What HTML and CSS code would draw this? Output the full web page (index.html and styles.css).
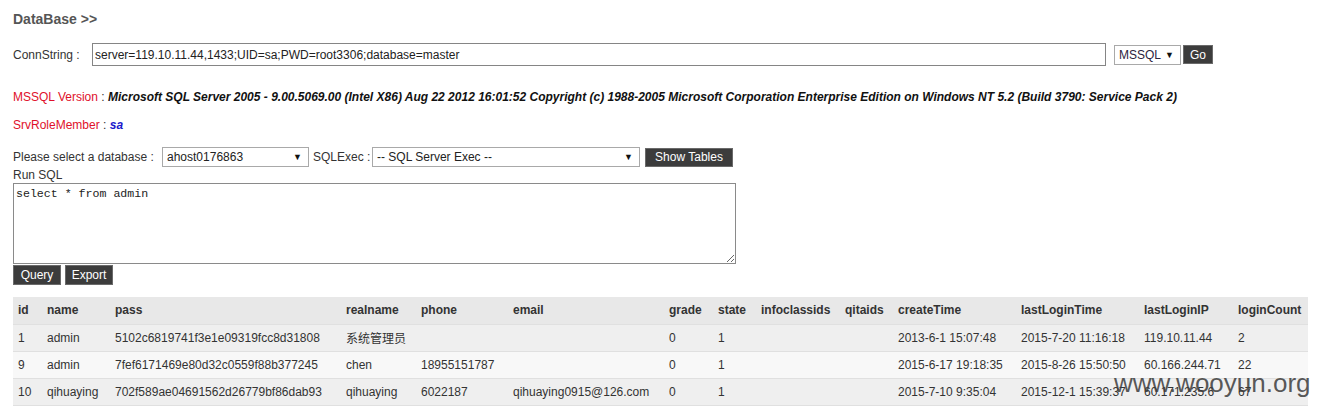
FILE: index.html
```html
<!DOCTYPE html>
<html>
<head>
<meta charset="utf-8">
<link rel="stylesheet" href="styles.css">
</head>
<body>
<div class="wrap">
  <h2 class="title">DataBase &gt;&gt;</h2>
  <div class="conn">
    <span class="lbl-conn">ConnString :</span>
    <input class="conn-input" type="text" value="server=119.10.11.44,1433;UID=sa;PWD=root3306;database=master">
    <span class="sel sel-type"><span class="sel-text">MSSQL</span><span class="arrow">▼</span></span>
    <button class="btn btn-go">Go</button>
  </div>
  <p class="info"><span class="red">MSSQL Version</span> : <b class="bi">Microsoft SQL Server 2005 - 9.00.5069.00 (Intel X86) Aug 22 2012 16:01:52 Copyright (c) 1988-2005 Microsoft Corporation Enterprise Edition on Windows NT 5.2 (Build 3790: Service Pack 2)</b></p>
  <p class="info info2"><span class="red">SrvRoleMember</span> : <b class="bi blue">sa</b></p>
  <div class="selrow">
    <span class="lbl-db">Please select a database :</span>
    <span class="sel sel-db"><span class="sel-text">ahost0176863</span><span class="arrow">▼</span></span>
    <span class="lbl-exec">SQLExec :</span>
    <span class="sel sel-exec"><span class="sel-text">-- SQL Server Exec --</span><span class="arrow">▼</span></span>
    <button class="btn btn-show">Show Tables</button>
  </div>
  <div class="runsql">Run SQL</div>
  <textarea class="sql">select * from admin</textarea>
  <div class="actions">
    <button class="btn btn-q">Query</button>
    <button class="btn btn-q">Export</button>
  </div>
  <table class="grid">
    <colgroup>
      <col style="width:29px"><col style="width:68px"><col style="width:231px"><col style="width:75px"><col style="width:92px"><col style="width:156px"><col style="width:49px"><col style="width:43px"><col style="width:84px"><col style="width:53px"><col style="width:123px"><col style="width:123px"><col style="width:94px"><col style="width:75px">
    </colgroup>
    <thead>
      <tr><th>id</th><th>name</th><th>pass</th><th>realname</th><th>phone</th><th>email</th><th>grade</th><th>state</th><th>infoclassids</th><th>qitaids</th><th>createTime</th><th>lastLoginTime</th><th>lastLoginIP</th><th>loginCount</th></tr>
    </thead>
    <tbody>
      <tr class="odd"><td>1</td><td>admin</td><td>5102c6819741f3e1e09319fcc8d31808</td><td>系统管理员</td><td></td><td></td><td>0</td><td>1</td><td></td><td></td><td>2013-6-1 15:07:48</td><td>2015-7-20 11:16:18</td><td>119.10.11.44</td><td>2</td></tr>
      <tr class="even"><td>9</td><td>admin</td><td>7fef6171469e80d32c0559f88b377245</td><td>chen</td><td>18955151787</td><td></td><td>0</td><td>1</td><td></td><td></td><td>2015-6-17 19:18:35</td><td>2015-8-26 15:50:50</td><td>60.166.244.71</td><td>22</td></tr>
      <tr class="odd"><td>10</td><td>qihuaying</td><td>702f589ae04691562d26779bf86dab93</td><td>qihuaying</td><td>6022187</td><td>qihuaying0915@126.com</td><td>0</td><td>1</td><td></td><td></td><td>2015-7-10 9:35:04</td><td>2015-12-1 15:39:37</td><td>60.171.235.6</td><td>67</td></tr>
    </tbody>
  </table>
</div>
<div class="watermark">www.wooyun.org</div>
</body>
</html>
```
FILE: styles.css
```css
* { box-sizing: border-box; }
html, body { margin: 0; padding: 0; background: #fff; }
body {
  font-family: "Liberation Sans", Arial, "Noto Sans CJK SC", sans-serif;
  font-size: 12px;
  color: #333;
  position: relative;
  width: 1320px;
  height: 413px;
  overflow: hidden;
}
.wrap { padding: 12px 13px 0 13px; }
.title {
  margin: 0;
  font-size: 14px;
  line-height: 14px;
  font-weight: bold;
  color: #555;
}
.conn {
  margin-top: 17px;
  display: flex;
  align-items: center;
  height: 23px;
}
.lbl-conn { width: 79px; flex: none; }
.conn-input {
  width: 1014px;
  height: 23px;
  border: 1px solid #858585;
  padding: 0 2px;
  font-family: "Liberation Sans", Arial, sans-serif;
  font-size: 12px;
  color: #222;
  outline: none;
  margin: 0;
}
.sel {
  display: inline-flex;
  align-items: center;
  justify-content: space-between;
  height: 20px;
  border: 1px solid #a9a9a9;
  background: #fff;
  padding: 0 6px 0 4px;
  color: #222;
  flex: none;
}
.arrow { font-size: 9px; color: #111; }
.sel-type { width: 67px; margin-left: 8px; color: #2b2340; }
.btn {
  font-family: "Liberation Sans", Arial, sans-serif;
  font-size: 12px;
  color: #fff;
  background: #3c3c3c;
  border: 1px solid #6a6a6a;
  height: 20px;
  padding: 0;
  margin: 0;
  flex: none;
}
.btn-go { width: 30px; height: 19px; margin-left: 2px; }
.info {
  margin: 24px 0 0 0;
  line-height: 14px;
  white-space: nowrap;
}
.info2 { margin-top: 14px; }
.red { color: #e0102a; }
.bi { font-style: italic; font-weight: bold; color: #111; }
.blue { color: #1a1acc; }
.selrow {
  margin-top: 15px;
  display: flex;
  align-items: center;
  height: 20px;
}
.lbl-db { width: 149px; flex: none; }
.sel-db { width: 147px; }
.lbl-exec { width: 63px; padding-left: 4px; flex: none; }
.sel-exec { width: 268px; }
.btn-show { width: 88px; height: 19px; margin-left: 5px; }
.runsql { line-height: 14px; margin-top: 1px; }
.sql {
  display: block;
  margin: 1px 0 0 0;
  width: 723px;
  height: 81px;
  border: 1px solid #8a8a8a;
  padding: 3px 2px;
  font-family: "Liberation Mono", "Courier New", monospace;
  font-size: 11.6px;
  color: #222;
  outline: none;
}
.actions {
  margin-top: 1px;
  display: flex;
  gap: 4px;
}
.btn-q { width: 48px; height: 20px; }
.grid {
  margin-top: 12px;
  width: 1295px;
  table-layout: fixed;
  border-collapse: collapse;
}
.grid th, .grid td {
  height: 27px;
  padding: 0 0 0 5px;
  text-align: left;
  white-space: nowrap;
  overflow: hidden;
  border-bottom: 1px solid #e0e0e0;
  color: #333;
}
.grid th { font-weight: bold; background: #e8e8e8; }
.grid tr.odd td { background: #efefef; }
.grid tr.even td { background: #f8f8f8; }
.watermark {
  position: absolute;
  left: 1114px;
  top: 368px;
  font-family: "Liberation Sans", Arial, sans-serif;
  font-size: 26px;
  color: rgba(60, 60, 60, 0.85);
  white-space: nowrap;
}
```
